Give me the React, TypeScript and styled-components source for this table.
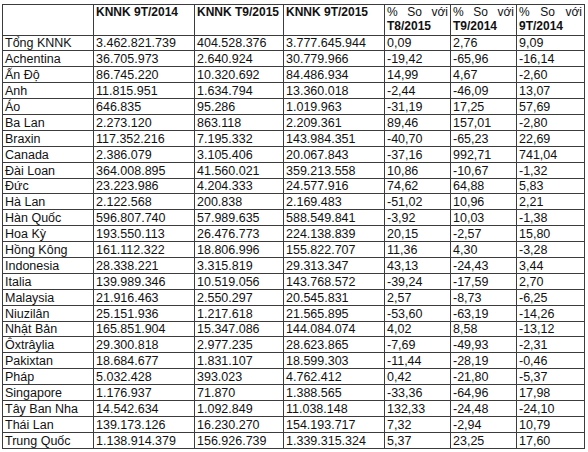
import React from 'react';
import styled, { createGlobalStyle } from 'styled-components';

const GlobalStyle = createGlobalStyle`
  html, body {
    margin: 0;
    padding: 0;
    background: #fff;
    overflow: hidden;
  }
`;

const Page = styled.div`
  width: 588px;
  height: 452px;
  padding: 4px 0 0 2px;
  box-sizing: border-box;
  font-family: "Liberation Sans", Arial, sans-serif;
  color: #111;
`;

const Table = styled.table`
  border-collapse: collapse;
  table-layout: fixed;
  width: 582px;
`;

const HeadCell = styled.th<{ $justify?: boolean }>`
  border: 1px solid #3c3c3c;
  height: 28.5px;
  padding: 1px 2px 0 2px;
  vertical-align: top;
  text-align: ${({ $justify }) => ($justify ? 'justify' : 'left')};
  font-size: 12px;
  line-height: 13.5px;
  font-weight: ${({ $justify }) => ($justify ? 'normal' : 'bold')};
  white-space: normal;
`;

const Bold = styled.b`
  font-weight: bold;
`;

const Cell = styled.td`
  border: 1px solid #3c3c3c;
  height: 14.9px;
  padding: 0 2px;
  font-size: 12.5px;
  line-height: 14px;
  vertical-align: bottom;
  white-space: nowrap;
  overflow: hidden;
`;

const widths = [91, 101, 89, 101, 66, 66, 68];

const rows: string[][] = [
  ['Tổng KNNK', '3.462.821.739', '404.528.376', '3.777.645.944', '0,09', '2,76', '9,09'],
  ['Achentina', '36.705.973', '2.640.924', '30.779.966', '-19,42', '-65,96', '-16,14'],
  ['Ấn Độ', '86.745.220', '10.320.692', '84.486.934', '14,99', '4,67', '-2,60'],
  ['Anh', '11.815.951', '1.634.794', '13.360.018', '-2,44', '-46,09', '13,07'],
  ['Áo', '646.835', '95.286', '1.019.963', '-31,19', '17,25', '57,69'],
  ['Ba Lan', '2.273.120', '863.118', '2.209.361', '89,46', '157,01', '-2,80'],
  ['Braxin', '117.352.216', '7.195.332', '143.984.351', '-40,70', '-65,23', '22,69'],
  ['Canada', '2.386.079', '3.105.406', '20.067.843', '-37,16', '992,71', '741,04'],
  ['Đài Loan', '364.008.895', '41.560.021', '359.213.558', '10,86', '-10,67', '-1,32'],
  ['Đức', '23.223.986', '4.204.333', '24.577.916', '74,62', '64,88', '5,83'],
  ['Hà Lan', '2.122.568', '200.838', '2.169.483', '-51,02', '10,96', '2,21'],
  ['Hàn Quốc', '596.807.740', '57.989.635', '588.549.841', '-3,92', '10,03', '-1,38'],
  ['Hoa Kỳ', '193.550.113', '26.476.773', '224.138.839', '20,15', '-2,57', '15,80'],
  ['Hồng Kông', '161.112.322', '18.806.996', '155.822.707', '11,36', '4,30', '-3,28'],
  ['Indonesia', '28.338.221', '3.315.819', '29.313.347', '43,13', '-24,43', '3,44'],
  ['Italia', '139.989.346', '10.519.056', '143.768.572', '-39,24', '-17,59', '2,70'],
  ['Malaysia', '21.916.463', '2.550.297', '20.545.831', '2,57', '-8,73', '-6,25'],
  ['Niuzilân', '25.151.936', '1.217.618', '21.565.895', '-53,60', '-63,19', '-14,26'],
  ['Nhật Bản', '165.851.904', '15.347.086', '144.084.074', '4,02', '8,58', '-13,12'],
  ['Ôxtrâylia', '29.300.818', '2.977.235', '28.623.865', '-7,69', '-49,93', '-2,31'],
  ['Pakixtan', '18.684.677', '1.831.107', '18.599.303', '-11,44', '-28,19', '-0,46'],
  ['Pháp', '5.032.428', '393.023', '4.762.412', '0,42', '-21,80', '-5,37'],
  ['Singapore', '1.176.937', '71.870', '1.388.565', '-33,36', '-64,96', '17,98'],
  ['Tây Ban Nha', '14.542.634', '1.092.849', '11.038.148', '132,33', '-24,48', '-24,10'],
  ['Thái Lan', '139.173.126', '16.230.270', '154.193.717', '7,32', '-2,94', '10,79'],
  ['Trung Quốc', '1.138.914.379', '156.926.739', '1.339.315.324', '5,37', '23,25', '17,60'],
];

const App: React.FC = () => {
  return (
    <>
      <GlobalStyle />
      <Page>
        <Table>
          <colgroup>
            {widths.map((w, i) => (
              <col key={i} style={{ width: w }} />
            ))}
          </colgroup>
          <thead>
            <tr>
              <HeadCell />
              <HeadCell>KNNK 9T/2014</HeadCell>
              <HeadCell>KNNK T9/2015</HeadCell>
              <HeadCell>KNNK 9T/2015</HeadCell>
              <HeadCell $justify>
                % So với <Bold>T8/2015</Bold>
              </HeadCell>
              <HeadCell $justify>
                % So với <Bold>T9/2014</Bold>
              </HeadCell>
              <HeadCell $justify>
                % So với <Bold>9T/2014</Bold>
              </HeadCell>
            </tr>
          </thead>
          <tbody>
            {rows.map((r) => (
              <tr key={r[0]}>
                {r.map((c, i) => (
                  <Cell key={i}>{c}</Cell>
                ))}
              </tr>
            ))}
          </tbody>
        </Table>
      </Page>
    </>
  );
};

export default App;
